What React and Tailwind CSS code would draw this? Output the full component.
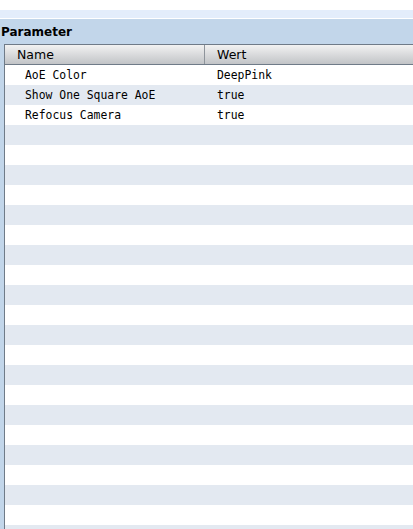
import React from "react";

const params = [
  { name: "AoE Color", value: "DeepPink" },
  { name: "Show One Square AoE", value: "true" },
  { name: "Refocus Camera", value: "true" },
];

export default function App() {
  const rows = Array.from({ length: 24 }, (_, i) => params[i] || null);

  return (
    <div className="w-[413px] h-[529px] overflow-hidden bg-white flex flex-col" style={{ fontFamily: '"DejaVu Sans", sans-serif' }}>
      {/* toolbar strip */}
      <div className="h-[10px] bg-white" />
      <div className="h-[8px] bg-[#e3edfb]" />
      <div className="h-px bg-white" />

      {/* property panel */}
      <div className="flex-1 flex flex-col bg-[#c2d6ea] min-h-0">
        <div className="h-[25px] flex items-center pl-px text-[12px] font-bold text-black leading-none">
          Parameter
        </div>

        <div className="flex-1 ml-[4px] border-l border-t border-[#6f7b88] bg-white flex flex-col min-h-0 overflow-hidden">
          {/* column header */}
          <div className="h-[20px] shrink-0 flex border-b border-[#6f7b88] bg-gradient-to-b from-[#f2f2f2] to-[#c2c4c7] text-[12.5px] text-black">
            <div className="w-[200px] border-r border-[#8e949b] flex items-center pl-[12px] pt-px">Name</div>
            <div className="flex-1 flex items-center pl-[12px] pt-px">Wert</div>
          </div>

          {/* rows */}
          {rows.map((row, i) => (
            <div
              key={i}
              className={`h-[20px] shrink-0 flex items-center text-[11.4px] text-black ${i % 2 === 1 ? "bg-[#e3e9f1]" : "bg-white"}`}
              style={{ fontFamily: '"DejaVu Sans Mono", monospace' }}
            >
              {row && (
                <>
                  <div className="w-[200px] pl-[20px] pt-px">{row.name}</div>
                  <div className="flex-1 pl-[12px] pt-px">{row.value}</div>
                </>
              )}
            </div>
          ))}
        </div>
      </div>
    </div>
  );
}
